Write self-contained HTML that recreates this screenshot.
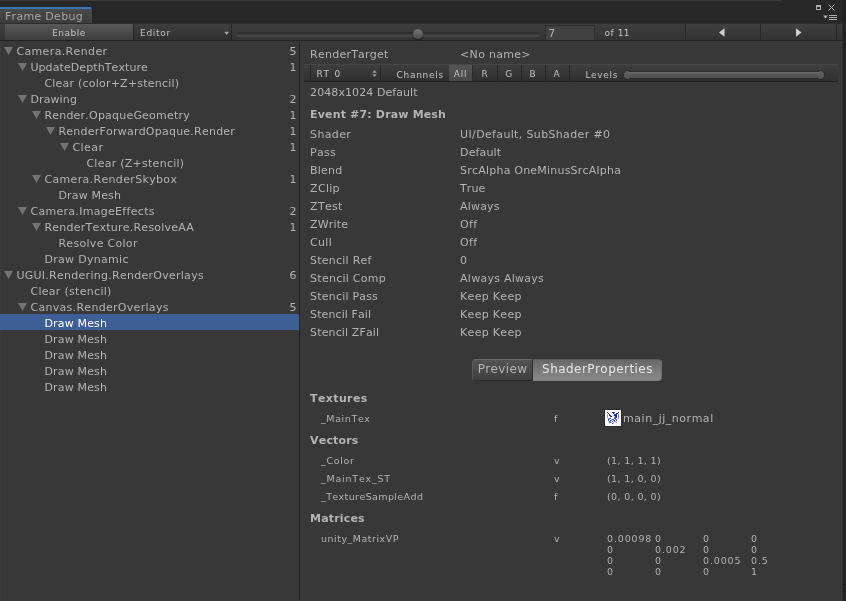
<!DOCTYPE html>
<html><head><meta charset="utf-8"><title>Frame Debug</title>
<style>
html,body{margin:0;padding:0;}
body{width:846px;height:601px;overflow:hidden;background:#383838;position:relative;
 font-family:"DejaVu Sans","Liberation Sans",sans-serif;font-size:11px;color:#b4b4b4;letter-spacing:0.3px;font-kerning:none;}
div,span,svg{position:absolute;white-space:nowrap;box-sizing:border-box;}
.t{line-height:16px;height:16px;margin-top:2px;margin-left:-0.6px;}
#top{left:0;top:0;width:846px;height:23px;background:#282828;}
#topstrip{left:0;top:0;width:781px;height:1px;background:#3d3a3a;}
#tab{left:0;top:7px;width:92px;height:16px;background:linear-gradient(#4a4a4a,#3c3c3c);border-top:2px solid #3b76bd;border-top-right-radius:2px;border-right:1px solid #4e4e4e;box-shadow:1px 0 0 #1f1f1f;}
#tab span{left:5px;top:1px;line-height:14px;font-size:11px;letter-spacing:0.29px;color:#a8a8a8;}
#toolbar{left:0;top:23px;width:842px;height:18px;background:linear-gradient(#3e3e3e,#333333);border-top:1px solid #2c2c2c;border-bottom:1px solid #222;}
.tb{top:24px;height:16px;font-size:9px;line-height:18px;overflow:hidden;letter-spacing:0.7px;color:#c4c4c4;}
.btn{background:linear-gradient(#4a4a4a,#3a3a3a);border-right:1px solid #262626;}
#sel{left:0;top:314px;width:299px;height:16px;background:#3e5f96;}
#divider{left:299px;top:42px;width:1px;height:559px;background:#232323;}
.n{left:261.3px;width:36px;text-align:right;}
.tri{fill:#737373;}
#rborder{left:842px;top:0;width:4px;height:601px;background:#222;border-left:1px solid #2f2f2f;}
.b{font-weight:bold;letter-spacing:0.16px;}
.m{font-size:9.5px;letter-spacing:0.45px;line-height:16px;height:16px;margin-top:1px;}
.d{letter-spacing:0.85px;}
.rt{top:65px;height:16px;font-size:9px;line-height:18.6px;overflow:hidden;letter-spacing:0.7px;color:#c4c4c4;}
</style></head><body>
<div id="root" style="left:0;top:0;width:846px;height:601px;will-change:transform;">
<div id="top"></div><div id="topstrip"></div>
<div id="tab"><span>Frame Debug</span></div>
<div id="toolbar"></div>
<div id="rborder"></div><div style="left:842px;top:0;width:1px;height:23px;background:#252525"></div>
<div id="divider"></div>
<div style="left:0;top:41px;width:1px;height:560px;background:#3b3b3b"></div><div style="left:0;top:600px;width:842px;height:1px;background:#3b3b3b"></div>
<div id="sel"></div>

<div class="tb btn" style="left:5px;width:129px;text-align:center;letter-spacing:0.5px;background:linear-gradient(#585858,#3e3e3e);">Enable</div>
<div class="tb btn" style="left:134px;width:98px;padding-left:6px;background:linear-gradient(#3e3e3e,#303030);">Editor</div>
<svg style="left:224px;top:31px" width="6" height="5"><path d="M0.3 0.7 H5 L2.65 4Z" fill="#a4a4a4"/></svg>
<div style="left:236px;top:32px;width:304px;height:5px;border-radius:3px;background:linear-gradient(#2b2b2b,#333 40%,#444 60%,#464646);"></div>
<div style="left:413px;top:29px;width:10px;height:10px;border-radius:5px;background:linear-gradient(#727272,#4e4e4e);box-shadow:0 1px 1px rgba(20,20,20,0.7);"></div>
<div class="tb" style="left:545px;top:25px;width:50px;height:15px;background:#414141;border:1px solid #2b2b2b;border-right-color:#303030;border-bottom:none;"></div>
<div class="tb" style="left:548.2px;font-size:11px;letter-spacing:0.3px;color:#b4b4b4;line-height:20.6px;">7</div>
<div class="tb" style="left:604.6px;letter-spacing:0.5px;">of 11</div>
<div class="tb btn" style="left:685px;width:76px;border-left:1px solid #262626;background:linear-gradient(#404040,#323232);"></div>
<div class="tb btn" style="left:761px;width:76px;background:linear-gradient(#404040,#323232);"></div>
<svg style="left:719px;top:28px" width="6" height="9"><path d="M5.5 0.2 L0 4.5 L5.5 8.8Z" fill="#d0d0d0"/></svg>
<svg style="left:795.6px;top:28px" width="6" height="9"><path d="M0 0.2 L5.5 4.5 L0 8.8Z" fill="#d0d0d0"/></svg>
<svg style="left:814px;top:2px" width="26" height="20"><rect x="2.5" y="3.5" width="4" height="4" fill="#222" stroke="#b0b0b0"/><rect x="2" y="3" width="5" height="2" fill="#b0b0b0"/><path d="M14.5 2.5 L20.5 8.5 M20.5 2.5 L14.5 8.5" stroke="#b0b0b0" stroke-width="1" fill="none"/><path d="M9 13.5 L14 13.5 L11.5 16.5Z" fill="#b0b0b0"/><rect x="15" y="13" width="8" height="1" fill="#b0b0b0"/><rect x="15" y="15" width="8" height="1" fill="#b0b0b0"/><rect x="15" y="17" width="8" height="1" fill="#b0b0b0"/></svg>
<svg class="tri" style="left:4px;top:47px;" width="9" height="8"><path d="M0 0H9L4.5 8Z"/></svg>
<div class="t" style="letter-spacing:0.36px;left:17px;top:42px;">Camera.Render</div>
<div class="t n" style="top:42px;">5</div>
<svg class="tri" style="left:18px;top:63px;" width="9" height="8"><path d="M0 0H9L4.5 8Z"/></svg>
<div class="t" style="letter-spacing:0.09px;left:31px;top:58px;">UpdateDepthTexture</div>
<div class="t n" style="top:58px;">1</div>
<div class="t" style="letter-spacing:0.22px;left:45px;top:74px;">Clear (color+Z+stencil)</div>
<svg class="tri" style="left:18px;top:95px;" width="9" height="8"><path d="M0 0H9L4.5 8Z"/></svg>
<div class="t" style="letter-spacing:0.12px;left:31px;top:90px;">Drawing</div>
<div class="t n" style="top:90px;">2</div>
<svg class="tri" style="left:32px;top:111px;" width="9" height="8"><path d="M0 0H9L4.5 8Z"/></svg>
<div class="t" style="letter-spacing:0.21px;left:45px;top:106px;">Render.OpaqueGeometry</div>
<div class="t n" style="top:106px;">1</div>
<svg class="tri" style="left:46px;top:127px;" width="9" height="8"><path d="M0 0H9L4.5 8Z"/></svg>
<div class="t" style="letter-spacing:0.23px;left:59px;top:122px;">RenderForwardOpaque.Render</div>
<div class="t n" style="top:122px;">1</div>
<svg class="tri" style="left:60px;top:143px;" width="9" height="8"><path d="M0 0H9L4.5 8Z"/></svg>
<div class="t" style="letter-spacing:0.48px;left:73px;top:138px;">Clear</div>
<div class="t n" style="top:138px;">1</div>
<div class="t" style="letter-spacing:0.26px;left:87px;top:154px;">Clear (Z+stencil)</div>
<svg class="tri" style="left:32px;top:175px;" width="9" height="8"><path d="M0 0H9L4.5 8Z"/></svg>
<div class="t" style="letter-spacing:0.34px;left:45px;top:170px;">Camera.RenderSkybox</div>
<div class="t n" style="top:170px;">1</div>
<div class="t" style="letter-spacing:0.17px;left:59px;top:186px;">Draw Mesh</div>
<svg class="tri" style="left:18px;top:207px;" width="9" height="8"><path d="M0 0H9L4.5 8Z"/></svg>
<div class="t" style="left:31px;top:202px;">Camera.ImageEffects</div>
<div class="t n" style="top:202px;">2</div>
<svg class="tri" style="left:32px;top:223px;" width="9" height="8"><path d="M0 0H9L4.5 8Z"/></svg>
<div class="t" style="letter-spacing:0.24px;left:45px;top:218px;">RenderTexture.ResolveAA</div>
<div class="t n" style="top:218px;">1</div>
<div class="t" style="left:59px;top:234px;">Resolve Color</div>
<div class="t" style="left:45px;top:250px;">Draw Dynamic</div>
<svg class="tri" style="left:4px;top:271px;" width="9" height="8"><path d="M0 0H9L4.5 8Z"/></svg>
<div class="t" style="letter-spacing:0.27px;left:17px;top:266px;">UGUI.Rendering.RenderOverlays</div>
<div class="t n" style="top:266px;">6</div>
<div class="t" style="left:31px;top:282px;">Clear (stencil)</div>
<svg class="tri" style="left:18px;top:303px;" width="9" height="8"><path d="M0 0H9L4.5 8Z"/></svg>
<div class="t" style="left:31px;top:298px;">Canvas.RenderOverlays</div>
<div class="t n" style="top:298px;">5</div>
<div class="t" style="color:#fff;letter-spacing:0.17px;left:45px;top:314px;">Draw Mesh</div>
<div class="t" style="letter-spacing:0.17px;left:45px;top:330px;">Draw Mesh</div>
<div class="t" style="letter-spacing:0.17px;left:45px;top:346px;">Draw Mesh</div>
<div class="t" style="letter-spacing:0.17px;left:45px;top:362px;">Draw Mesh</div>
<div class="t" style="letter-spacing:0.17px;left:45px;top:378px;">Draw Mesh</div>
<div class="t" style="letter-spacing:0.23px;left:310.7px;top:45px;">RenderTarget</div>
<div class="t" style="left:460.7px;top:45px;">&lt;No name&gt;</div>
<div style="left:304px;top:64px;width:534px;height:18px;background:linear-gradient(#3e3e3e,#2f2f2f);border-top:1px solid #464646;border-bottom:1px solid #1f1f1f;"></div>
<div style="left:310px;top:65px;width:1px;height:16px;background:#242424;"></div>
<div style="left:380px;top:65px;width:1px;height:16px;background:#242424;"></div>
<div style="left:497px;top:65px;width:1px;height:16px;background:#242424;"></div>
<div style="left:521px;top:65px;width:1px;height:16px;background:#242424;"></div>
<div style="left:545px;top:65px;width:1px;height:16px;background:#242424;"></div>
<div style="left:569px;top:65px;width:1px;height:16px;background:#242424;"></div>
<div class="rt" style="left:316.5px;word-spacing:1.2px;">RT 0</div>
<svg style="left:372px;top:70px" width="6" height="7"><path d="M0.2 2.8 L2.5 0 L4.8 2.8Z M0.2 4.2 L2.5 7 L4.8 4.2Z" fill="#9a9a9a"/></svg>
<div class="rt" style="left:396.6px;top:66px;">Channels</div>
<div class="rt" style="left:449px;width:24px;text-align:center;background:linear-gradient(#545454,#484848);border-right:1px solid #2a2a2a;">All</div>
<div class="rt" style="left:473px;width:24px;text-align:center;">R</div>
<div class="rt" style="left:497px;width:24px;text-align:center;">G</div>
<div class="rt" style="left:521px;width:24px;text-align:center;">B</div>
<div class="rt" style="left:545px;width:24px;text-align:center;">A</div>
<div class="rt" style="left:585.4px;top:66px;">Levels</div>
<div style="left:628px;top:71px;width:192px;height:8px;background:linear-gradient(#727272,#585858 30%,#505050);border-top:1px solid #2e2e2e;border-bottom:1px solid #262626;"></div>
<div style="left:623px;top:70px;width:6px;height:10px;background:linear-gradient(#646464,#555);border:1px solid #2c2c2c;border-right:none;border-radius:5px 0 0 5px;"></div>
<div style="left:819px;top:70px;width:6px;height:10px;background:linear-gradient(#646464,#555);border:1px solid #2c2c2c;border-left:none;border-radius:0 5px 5px 0;"></div>
<div class="t" style="letter-spacing:0.08px;left:310.7px;top:83px;">2048x1024 Default</div>
<div class="t b" style="left:310.7px;top:105px;">Event #7: Draw Mesh</div>
<div class="t" style="letter-spacing:0.36px;left:310.7px;top:125px;">Shader</div>
<div class="t" style="letter-spacing:0.35px;left:460.7px;top:125px;">UI/Default, SubShader #0</div>
<div class="t" style="left:310.7px;top:143px;">Pass</div>
<div class="t" style="letter-spacing:0.12px;left:460.7px;top:143px;">Default</div>
<div class="t" style="letter-spacing:0.2px;left:310.7px;top:161px;">Blend</div>
<div class="t" style="letter-spacing:0.21px;left:460.7px;top:161px;">SrcAlpha OneMinusSrcAlpha</div>
<div class="t" style="left:310.7px;top:179px;">ZClip</div>
<div class="t" style="letter-spacing:0.06px;left:460.7px;top:179px;">True</div>
<div class="t" style="letter-spacing:0.3px;left:310.7px;top:197px;">ZTest</div>
<div class="t" style="letter-spacing:0.16px;left:460.7px;top:197px;">Always</div>
<div class="t" style="letter-spacing:0.16px;left:310.7px;top:215px;">ZWrite</div>
<div class="t" style="left:460.7px;top:215px;">Off</div>
<div class="t" style="left:310.7px;top:233px;">Cull</div>
<div class="t" style="left:460.7px;top:233px;">Off</div>
<div class="t" style="letter-spacing:0.23px;left:310.7px;top:251px;">Stencil Ref</div>
<div class="t" style="left:460.7px;top:251px;">0</div>
<div class="t" style="letter-spacing:0.25px;left:310.7px;top:269px;">Stencil Comp</div>
<div class="t" style="letter-spacing:0.25px;left:460.7px;top:269px;">Always Always</div>
<div class="t" style="letter-spacing:0.2px;left:310.7px;top:287px;">Stencil Pass</div>
<div class="t" style="letter-spacing:0.3px;left:460.7px;top:287px;">Keep Keep</div>
<div class="t" style="letter-spacing:0.1px;left:310.7px;top:305px;">Stencil Fail</div>
<div class="t" style="letter-spacing:0.3px;left:460.7px;top:305px;">Keep Keep</div>
<div class="t" style="letter-spacing:0.13px;left:310.7px;top:323px;">Stencil ZFail</div>
<div class="t" style="letter-spacing:0.3px;left:460.7px;top:323px;">Keep Keep</div>
<div style="left:472px;top:359px;width:61px;height:22px;background:linear-gradient(#545454,#3f3f3f);border:1px solid;border-color:#6a6a6a #2a2a2a #2c2c2c #5a5a5a;border-radius:4px 0 0 4px;font-size:12px;letter-spacing:0.35px;line-height:19px;text-align:center;color:#b4b4b4;">Preview</div>
<div style="left:533px;top:359px;width:129px;height:22px;background:linear-gradient(#686868,#8a8a8a);border:1px solid;border-color:#5c5c5c #707070 #808080 #6a6a6a;border-left:none;border-radius:0 4px 4px 0;font-size:12px;letter-spacing:0.45px;line-height:19px;text-align:center;color:#e8e8e8;padding-left:1px;">ShaderProperties</div>
<div class="t b" style="left:310.7px;top:389px;letter-spacing:0.37px;">Textures</div>
<div class="m" style="left:321px;top:410px;letter-spacing:0.61px;">_MainTex</div>
<div class="m" style="left:554px;top:410px;">f</div>
<svg style="left:604px;top:409px" width="18" height="18"><rect width="18" height="18" fill="#2c2c2c"/><rect x="1" y="1" width="16" height="16" fill="#fff"/><g transform="translate(1,1)" filter="url(#bl)"><rect x="2" y="2" width="1" height="1" fill="#1d2e78"/><rect x="7" y="2" width="1" height="1" fill="#1d2e78"/><rect x="8" y="2" width="1" height="1" fill="#1d2e78"/><rect x="9" y="2" width="1" height="1" fill="#1d2e78"/><rect x="13" y="2" width="1" height="1" fill="#1d2e78"/><rect x="3" y="3" width="1" height="1" fill="#1d2e78"/><rect x="8" y="3" width="1" height="1" fill="#1d2e78"/><rect x="11" y="3" width="1" height="1" fill="#1d2e78"/><rect x="12" y="3" width="1" height="1" fill="#1d2e78"/><rect x="2" y="4" width="1" height="1" fill="#93a6e2"/><rect x="4" y="4" width="1" height="1" fill="#1d2e78"/><rect x="9" y="4" width="1" height="1" fill="#1d2e78"/><rect x="10" y="4" width="1" height="1" fill="#1d2e78"/><rect x="11" y="4" width="1" height="1" fill="#1d2e78"/><rect x="13" y="4" width="1" height="1" fill="#93a6e2"/><rect x="2" y="5" width="1" height="1" fill="#93a6e2"/><rect x="4" y="5" width="1" height="1" fill="#1d2e78"/><rect x="5" y="5" width="1" height="1" fill="#1d2e78"/><rect x="8" y="5" width="1" height="1" fill="#93a6e2"/><rect x="9" y="5" width="1" height="1" fill="#1d2e78"/><rect x="10" y="5" width="1" height="1" fill="#1d2e78"/><rect x="11" y="5" width="1" height="1" fill="#1d2e78"/><rect x="13" y="5" width="1" height="1" fill="#3f5fc9"/><rect x="2" y="6" width="1" height="1" fill="#93a6e2"/><rect x="5" y="6" width="1" height="1" fill="#1d2e78"/><rect x="6" y="6" width="1" height="1" fill="#1d2e78"/><rect x="10" y="6" width="1" height="1" fill="#1d2e78"/><rect x="11" y="6" width="1" height="1" fill="#1d2e78"/><rect x="13" y="6" width="1" height="1" fill="#3f5fc9"/><rect x="2" y="7" width="1" height="1" fill="#93a6e2"/><rect x="9" y="7" width="1" height="1" fill="#1d2e78"/><rect x="10" y="7" width="1" height="1" fill="#3f5fc9"/><rect x="11" y="7" width="1" height="1" fill="#1d2e78"/><rect x="13" y="7" width="1" height="1" fill="#93a6e2"/><rect x="3" y="8" width="1" height="1" fill="#93a6e2"/><rect x="4" y="8" width="1" height="1" fill="#3f5fc9"/><rect x="5" y="8" width="1" height="1" fill="#3f5fc9"/><rect x="9" y="8" width="1" height="1" fill="#3f5fc9"/><rect x="10" y="8" width="1" height="1" fill="#3f5fc9"/><rect x="13" y="8" width="1" height="1" fill="#93a6e2"/><rect x="3" y="9" width="1" height="1" fill="#3f5fc9"/><rect x="4" y="9" width="1" height="1" fill="#93a6e2"/><rect x="6" y="9" width="1" height="1" fill="#93a6e2"/><rect x="7" y="9" width="1" height="1" fill="#3f5fc9"/><rect x="8" y="9" width="1" height="1" fill="#3f5fc9"/><rect x="10" y="9" width="1" height="1" fill="#3f5fc9"/><rect x="11" y="9" width="1" height="1" fill="#3f5fc9"/><rect x="3" y="10" width="1" height="1" fill="#3f5fc9"/><rect x="5" y="10" width="1" height="1" fill="#3f5fc9"/><rect x="6" y="10" width="1" height="1" fill="#93a6e2"/><rect x="8" y="10" width="1" height="1" fill="#3f5fc9"/><rect x="9" y="10" width="1" height="1" fill="#3f5fc9"/><rect x="11" y="10" width="1" height="1" fill="#3f5fc9"/><rect x="4" y="11" width="1" height="1" fill="#3f5fc9"/><rect x="5" y="11" width="1" height="1" fill="#93a6e2"/><rect x="7" y="11" width="1" height="1" fill="#3f5fc9"/><rect x="9" y="11" width="1" height="1" fill="#3f5fc9"/><rect x="10" y="11" width="1" height="1" fill="#93a6e2"/><rect x="4" y="12" width="1" height="1" fill="#3f5fc9"/><rect x="5" y="12" width="1" height="1" fill="#3f5fc9"/><rect x="6" y="12" width="1" height="1" fill="#93a6e2"/><rect x="8" y="12" width="1" height="1" fill="#93a6e2"/><rect x="11" y="12" width="1" height="1" fill="#93a6e2"/><rect x="7" y="13" width="1" height="1" fill="#3f5fc9"/><rect x="8" y="13" width="1" height="1" fill="#93a6e2"/></g><defs><filter id="bl"><feGaussianBlur stdDeviation="0.35"/></filter></defs></svg>
<div class="t" style="left:623.7px;top:409px;letter-spacing:0.52px;">main_jj_normal</div>
<div class="t b" style="left:310.7px;top:431px;">Vectors</div>
<div class="m" style="left:321px;top:452px;letter-spacing:0.67px;">_Color</div>
<div class="m" style="left:554px;top:452px;">v</div>
<div class="m" style="left:607px;top:452px;letter-spacing:0.36px;">(1, 1, 1, 1)</div>
<div class="m" style="left:321px;top:470px;letter-spacing:0.78px;">_MainTex_ST</div>
<div class="m" style="left:554px;top:470px;">v</div>
<div class="m" style="left:607px;top:470px;letter-spacing:0.36px;">(1, 1, 0, 0)</div>
<div class="m" style="left:321px;top:488px;letter-spacing:0.39px;">_TextureSampleAdd</div>
<div class="m" style="left:554px;top:488px;">f</div>
<div class="m" style="left:607px;top:488px;letter-spacing:0.36px;">(0, 0, 0, 0)</div>
<div class="t b" style="left:310.7px;top:509px;">Matrices</div>
<div class="m" style="left:321px;top:530px;letter-spacing:0.5px;">unity_MatrixVP</div>
<div class="m" style="left:554px;top:530px;">v</div>
<div class="m d" style="left:607px;top:530px;">0.00098</div>
<div class="m d" style="left:655px;top:530px;">0</div>
<div class="m d" style="left:703px;top:530px;">0</div>
<div class="m d" style="left:751px;top:530px;">0</div>
<div class="m d" style="left:607px;top:541px;">0</div>
<div class="m d" style="left:655px;top:541px;">0.002</div>
<div class="m d" style="left:703px;top:541px;">0</div>
<div class="m d" style="left:751px;top:541px;">0</div>
<div class="m d" style="left:607px;top:552px;">0</div>
<div class="m d" style="left:655px;top:552px;">0</div>
<div class="m d" style="left:703px;top:552px;">0.0005</div>
<div class="m d" style="left:751px;top:552px;">0.5</div>
<div class="m d" style="left:607px;top:563px;">0</div>
<div class="m d" style="left:655px;top:563px;">0</div>
<div class="m d" style="left:703px;top:563px;">0</div>
<div class="m d" style="left:751px;top:563px;">1</div>
<div style="left:843px;top:584px;width:3px;height:1px;background:#181818;"></div>
</div></body></html>
